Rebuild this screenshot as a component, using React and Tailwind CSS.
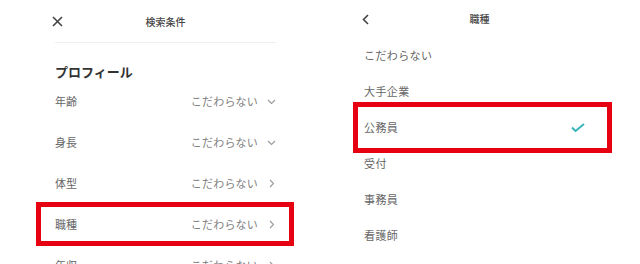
import React from 'react'

const font = { fontFamily: '"Noto Sans CJK JP", "Noto Sans", sans-serif' }

const ChevronDown = () => (
  <svg width="9" height="6" viewBox="0 0 9 6" fill="none" stroke="#9a9a9a" strokeWidth="1.1">
    <path d="M1 1l3.5 3.5L8 1" />
  </svg>
)

const ChevronRight = () => (
  <svg width="6" height="9" viewBox="0 0 6 9" fill="none" stroke="#9a9a9a" strokeWidth="1.1">
    <path d="M1 1l3.5 3.5L1 8" />
  </svg>
)

const rows = [
  { label: '年齢', icon: 'down' },
  { label: '身長', icon: 'down' },
  { label: '体型', icon: 'right' },
  { label: '職種', icon: 'right', marked: true },
  { label: '年収', icon: 'right' },
]

const jobs = ['こだわらない', '大手企業', '公務員', '受付', '事務員', '看護師', '保育士']

const SearchPanel = () => (
  <div className="w-[320px] h-full pl-[55px] pr-[44px] overflow-hidden">
    <div className="h-[43px] flex items-center relative border-b border-[#eeeeee]">
      <svg className="absolute left-[-3px] top-[16px]" width="11" height="11" viewBox="0 0 11 11" stroke="#444" strokeWidth="1.6">
        <path d="M1 1l9 9M10 1l-9 9" />
      </svg>
      <div className="flex-1 text-center text-[10px] text-[#444] font-medium">検索条件</div>
    </div>
    <div className="h-[38px] flex items-end">
      <div className="text-[13px] leading-[19px] font-bold text-[#333]">プロフィール</div>
    </div>
    {rows.map((r) => (
      <div key={r.label} className="h-[41px] flex items-center relative">
        {r.marked && (
          <div className="absolute left-[-19px] right-[-18px] top-[-2px] bottom-[-1px] border-[5px] border-[#e60012]" />
        )}
        <div className="flex-1 text-[11px] text-[#666]">{r.label}</div>
        <div className="text-[11px] text-[#808080] tracking-[0.2px] mr-[9px]">こだわらない</div>
        <div className="w-[9px] flex justify-center">{r.icon === 'down' ? <ChevronDown /> : <ChevronRight />}</div>
      </div>
    ))}
  </div>
)

const JobPanel = () => (
  <div className="w-[320px] h-full pl-[44px] pr-[55px] overflow-hidden">
    <div className="h-[37px] flex items-center relative">
      <svg className="absolute left-[-2px] top-[14px]" width="7" height="11" viewBox="0 0 7 11" fill="none" stroke="#444" strokeWidth="1.6">
        <path d="M6 1L1.5 5.5 6 10" />
      </svg>
      <div className="flex-1 text-center text-[10px] text-[#444] font-medium pl-[10px]">職種</div>
    </div>
    {jobs.map((j) => (
      <div key={j} className="h-[36px] flex items-center relative">
        {j === '公務員' && (
          <div className="absolute left-[-11px] right-[-27px] top-[-7px] bottom-[-8px] border-[5px] border-[#e60012]" />
        )}
        <div className="flex-1 text-[11px] text-[#666] tracking-[0.4px]">{j}</div>
        {j === '公務員' && (
          <svg width="14" height="9" viewBox="0 0 14 9" fill="none" stroke="#3ab3bd" strokeWidth="2">
            <path d="M1 4.5l3.5 3.5L13 1" />
          </svg>
        )}
      </div>
    ))}
  </div>
)

export default function App() {
  return (
    <div className="w-[640px] h-[264px] bg-white flex overflow-hidden" style={font}>
      <SearchPanel />
      <JobPanel />
    </div>
  )
}
